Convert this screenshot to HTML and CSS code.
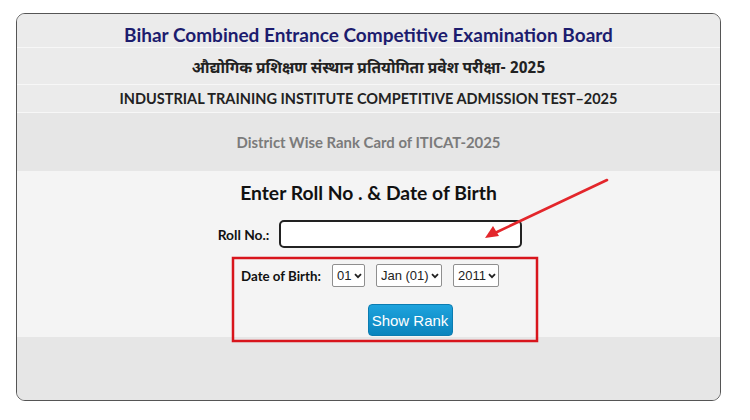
FILE: index.html
```html
<!DOCTYPE html>
<html>
<head>
<meta charset="utf-8">
<link rel="stylesheet" href="styles.css">
</head>
<body>
<div class="page">
  <div class="card">
    <div class="row title">Bihar Combined Entrance Competitive Examination Board</div>
    <div class="row hindi">औद्योगिक प्रशिक्षण संस्थान प्रतियोगिता प्रवेश परीक्षा- 2025</div>
    <div class="row eng">INDUSTRIAL TRAINING INSTITUTE COMPETITIVE ADMISSION TEST–2025</div>
    <div class="row district">District Wise Rank Card of ITICAT-2025</div>
    <div class="form">
      <h2 class="form-head">Enter Roll No . &amp; Date of Birth</h2>
      <div class="field roll">
        <label class="lbl">Roll No.:</label>
        <input class="roll-input" type="text">
      </div>
      <div class="field dob">
        <label class="lbl">Date of Birth:</label>
        <span class="selwrap"><select class="sel"><option>01</option></select><svg class="chev" width="8" height="6" viewBox="0 0 8 6"><path d="M1 1.2 L4 4.2 L7 1.2" fill="none" stroke="#222" stroke-width="1.8"/></svg></span>
        <span class="selwrap"><select class="sel"><option>Jan (01)</option></select><svg class="chev" width="8" height="6" viewBox="0 0 8 6"><path d="M1 1.2 L4 4.2 L7 1.2" fill="none" stroke="#222" stroke-width="1.8"/></svg></span>
        <span class="selwrap"><select class="sel"><option>2011</option></select><svg class="chev" width="8" height="6" viewBox="0 0 8 6"><path d="M1 1.2 L4 4.2 L7 1.2" fill="none" stroke="#222" stroke-width="1.8"/></svg></span>
      </div>
      <div class="btn-row">
        <button class="btn">Show Rank</button>
      </div>
    </div>
    <div class="foot"></div>
  </div>
  <svg class="annot" width="750" height="420" viewBox="0 0 750 420">
    <rect x="233" y="258" width="304" height="83" fill="none" stroke="#d8151c" stroke-width="2.5"/>
    <line x1="607" y1="180" x2="497" y2="232" stroke="#e3262b" stroke-width="2.6" stroke-linecap="round"/>
    <polygon points="485,238 493,226 499,236" fill="#e3262b"/>
  </svg>
</div>
</body>
</html>
```
FILE: styles.css
```css
* { box-sizing: border-box; }
html, body { margin: 0; padding: 0; background: #ffffff; }
.page {
  position: relative;
  width: 750px;
  height: 420px;
  padding: 13px 0 0 16px;
}
.card {
  width: 705px;
  height: 388px;
  border: 1.5px solid #555;
  border-radius: 9px;
  overflow: hidden;
  background: #e6e6e6;
  display: flex;
  flex-direction: column;
  font-family: Lato, "Open Sans", sans-serif;
}
.row {
  display: flex;
  align-items: center;
  justify-content: center;
  background: #ebebeb;
  border-bottom: 1px solid #f7f7f7;
  font-weight: 700;
  white-space: nowrap;
}
.title {
  height: 34px;
  font-size: 19px;
  color: #1c1c6e;
  padding-top: 8px;
}
.hindi {
  height: 37px;
  font-size: 15.5px;
  color: #222;
  padding-top: 6px;
  font-family: "Noto Sans Devanagari", Lohit, FreeSans, Lato, sans-serif;
}
.eng {
  height: 28px;
  font-size: 14.5px;
  color: #222;
}
.district {
  height: 58px;
  font-size: 14.9px;
  color: #7b7b7b;
  background: #e6e6e6;
  border-bottom: none;
}
.form {
  height: 166px;
  background: #f4f4f4;
  display: flex;
  flex-direction: column;
  align-items: center;
  padding-top: 9px;
}
.form-head {
  margin: 0;
  font-size: 19.3px;
  line-height: 26px;
  font-weight: 700;
  color: #111;
}
.field {
  display: flex;
  align-items: center;
}
.roll {
  margin-top: 14px;
  margin-left: 3px;
  gap: 10px;
}
.lbl {
  font-size: 13.3px;
  font-weight: 700;
  color: #111;
}
.roll .lbl { font-size: 13.8px; }
.roll-input {
  width: 243px;
  height: 28px;
  border: 2px solid #222;
  border-radius: 5px;
  background: #fff;
  outline: none;
}
.dob {
  margin-top: 16px;
  margin-left: 3px;
  gap: 11px;
}
.selwrap {
  display: inline-flex;
  align-items: center;
  height: 23px;
  border: 1px solid #8f8f8f;
  border-radius: 2px;
  background: #fff;
  padding: 0 2px 0 4px;
  gap: 2px;
}
.sel {
  appearance: none;
  -webkit-appearance: none;
  border: none;
  background: transparent;
  font-family: "Liberation Sans", Arial, sans-serif;
  font-size: 13px;
  color: #222;
  padding: 0;
  margin: 0;
  outline: none;
}
.chev { flex: none; margin-top: 1px; }
.btn-row {
  margin-top: 17px;
  margin-left: 83px;
}
.btn {
  width: 85px;
  height: 32px;
  border: 1px solid #0b7cb1;
  border-radius: 4px;
  background: linear-gradient(#1ea3dd, #0a84bd);
  color: #fff;
  font-family: "Liberation Sans", Arial, sans-serif;
  font-size: 15px;
  padding: 0;
}
.foot {
  flex: 1;
  background: #e6e6e6;
}
.annot {
  position: absolute;
  left: 0;
  top: 0;
  pointer-events: none;
}
```
